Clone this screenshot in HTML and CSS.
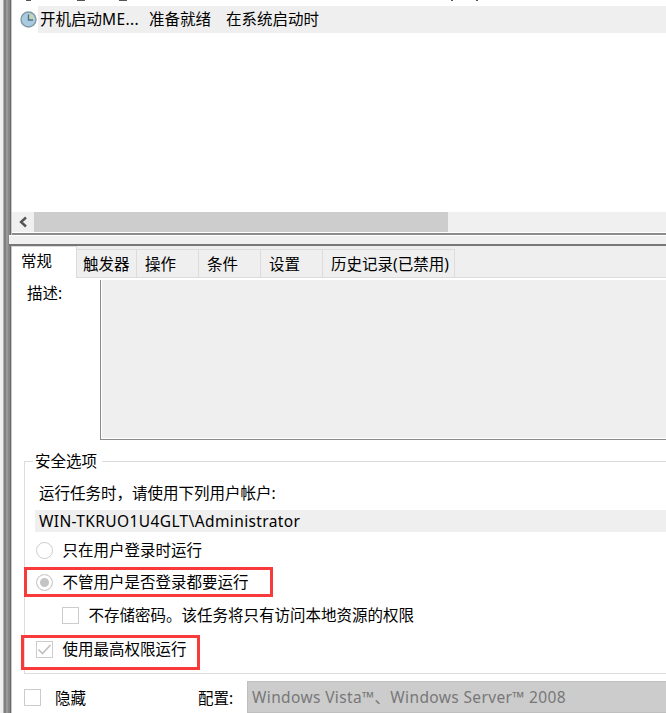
FILE: index.html
```
<!DOCTYPE html>
<html lang="zh-CN">
<head>
	<meta charset="utf-8">
	<title>任务计划程序</title>
	<link rel="stylesheet" href="styles.css">
</head>
<body>
	<div class="window">
		<div class="edge"></div>
		<div class="main">
			<div class="list">
				<div class="row-above"><i class="m1"></i><i class="m2"></i><i class="m3"></i><i class="m4"></i><i class="m5"></i></div>
				<div class="task">
					<svg class="clock" width="18" height="18" viewBox="0 0 18 18">
						<circle cx="8.500" cy="8.500" r="7.500" fill="#a9cbe0" stroke="#8199a8" stroke-width="1.400"/>
						<path d="M8.500 8.500V2.500a6 6 0 0 1 6 6z" fill="#c5d5b5"/>
						<path d="M8.500 3.500v5.500h4.500" fill="none" stroke="#4d7391" stroke-width="1.400"/>
					</svg>
					<div class="task-cells">
						<span class="name">开机启动<span class="latin">ME...</span></span>
						<span class="status">准备就绪</span>
						<span>在系统启动时</span>
					</div>
				</div>
				<div class="scrollbar">
					<svg class="arrow" width="22" height="20" viewBox="0 0 22 20"><path d="M14 5.500L9 10l5 4.500" fill="none" stroke="#555" stroke-width="2.400"/></svg>
					<div class="thumb"></div>
				</div>
			</div>
			<div class="splitter"></div>
			<div class="details">
				<div class="tabs">
					<div class="tab active">常规</div>
					<div class="tab t1">触发器</div>
					<div class="tab t2">操作</div>
					<div class="tab t3">条件</div>
					<div class="tab t4">设置</div>
					<div class="tab t5">历史记录(已禁用)</div>
					<div class="tab-rest"></div>
				</div>
				<div class="description">
					<label>描述:</label>
					<div class="textbox"></div>
				</div>
				<div class="security">
					<div class="legend">安全选项</div>
					<p class="prompt">运行任务时，请使用下列用户帐户:</p>
					<div class="account">WIN-TKRUO1U4GLT\Administrator</div>
					<div class="option o1"><span class="radio"></span>只在用户登录时运行</div>
					<div class="option o2"><span class="radio checked"></span>不管用户是否登录都要运行</div>
					<div class="option o3"><span class="check"></span>不存储密码。该任务将只有访问本地资源的权限</div>
					<div class="option o4"><span class="check"><svg width="15" height="15" viewBox="0 0 15 15"><path d="M1.500 7.500l4 4 8-8.500" fill="none" stroke="#bfbfbf" stroke-width="1.600"/></svg></span>使用最高权限运行</div>
					<div class="mark mark-login"></div>
					<div class="mark mark-rights"></div>
				</div>
				<div class="bottom">
					<span class="check"></span>
					<span class="hide">隐藏</span>
					<span class="conf">配置:</span>
					<div class="select">Windows Vista™、Windows Server™ 2008</div>
				</div>
			</div>
		</div>
	</div>
</body>
</html>
```
FILE: styles.css
```
*{box-sizing: border-box;}
body{margin: 0; overflow: hidden; background: #fff; font-family: "Noto Sans", "Noto Sans CJK SC", sans-serif; font-size: 15.5px; line-height: 22px; color: #000; white-space: nowrap;}
.window{display: flex; width: 666px; height: 713px; overflow: hidden;}
.edge{flex: none; width: 12px; background: linear-gradient(to right, #efefef 3px, #b0b0b0 3px, #b0b0b0 4px, #808080 4px, #808080 6px, #9a9a9a 6px, #9a9a9a 8px, #888 8px, #888 10px, #686868 10px, #686868 11px, #c8c8c8 11px);}
.main{flex: 1; min-width: 0;}

/* task list */
.list{display: flex; flex-direction: column; height: 235px; border-bottom: 2px solid #8c8c8c;}
.row-above{display: flex; flex: none; height: 6px;}
.row-above i{height: 1px; background: #555;}
.m1{width: 5px; margin-left: 14px;}
.m2{width: 8px; margin-left: 46px;}
.m3{width: 8px; margin-left: 34px;}
.m4{width: 2px; margin-left: 324px;}
.m5{width: 2px; margin-left: 23px;}
.task{display: flex; flex: none; height: 27px; padding-left: 8px;}
.clock{flex: none; margin-top: 5px;}
.task-cells{display: flex; flex: 1; padding-left: 2px; line-height: 27px; background: #efefef;}
.name{width: 109px;}
.latin{letter-spacing: .4px;}
.status{width: 77px;}
.scrollbar{display: flex; flex: none; height: 20px; margin-top: auto; margin-bottom: 1px; background: #f0f0f0;}
.thumb{width: 414px; background: #cdcdcd;}
.splitter{position: relative; height: 11px; margin-left: -3px; background: #f0f0f0; border-top: 1px solid #fff; border-bottom: 2px solid #777;}

/* tabs */
.tabs{display: flex; align-items: flex-start; height: 33px; background: #efefef; border-bottom: 1px solid #fff;}
.tab{height: 29px; margin-top: 3px; padding-left: 6px; line-height: 28px; border: solid #dcdcdc; border-width: 1px 1px 1px 0;}
.active{width: 65px; height: 32px; margin-top: 0; padding-left: 9px; line-height: 29px; background: #fff; border-width: 1px 1px 0 0;}
.t1{width: 60px;}
.t2{width: 62px; padding-left: 8px;}
.t3{width: 62px; padding-left: 8px;}
.t4{width: 62px; padding-left: 8px;}
.t5{width: 132px; padding-left: 8px;}
.tab-rest{flex: 1; height: 32px; border-bottom: 1px solid #dcdcdc;}

.description{display: flex; height: 161px;}
.description label{width: 88px; padding: 3px 0 0 15px;}
.textbox{flex: 1; height: 160px; margin-top: 1px; background: #efefef; border: solid #8a8a8a; border-width: 0 0 1px 1px; box-shadow: inset 1px -1px #fff;}

/* security options */
.security{position: relative; height: 213px; margin: 21px 0 0 12px; padding-left: 10px; border: solid #dcdcdc; border-width: 1px 0 1px 1px;}
.legend{width: 69px; height: 22px; margin-top: -12px; margin-left: -2px; padding-left: 2px; background: #fff;}
.prompt{margin: 10px 0 0 4px;}
.account{height: 22px; margin-top: 6px; padding-left: 4px; letter-spacing: .38px; background: #efefef;}
.option{display: flex; align-items: center; height: 22px; margin-left: 1px;}
.radio, .check{display: block; flex: none; width: 17px; height: 17px; margin-right: 9.5px; border: 1px solid #ccc;}
.radio{border-radius: 50%;}
.checked{background: #c4c4c4; box-shadow: inset 0 0 0 3px #fff;}
.check svg{display: block;}
.o1{margin-top: 7px;}
.o2{margin-top: 10px;}
.o3{margin: 11px 0 0 27px;}
.o4{margin-top: 12px;}
.mark{position: absolute; border: 3px solid #f93a3a;}
.mark-login{left: -1px; top: 105px; width: 249px; height: 30px;}
.mark-rights{left: -4px; top: 173px; width: 179px; height: 35px;}

.bottom{display: flex; align-items: center; height: 32px; margin-top: 7px; padding-left: 12px;}
.hide{width: 143px; margin: 2px 0 0 4.5px;}
.conf{width: 49px; margin-top: 2px;}
.select{flex: 1; height: 32px; padding-left: 4px; line-height: 31px; letter-spacing: .37px; color: #787878; background: #ccc; border: 1px solid #bfbfbf; border-right: 0;}
```
